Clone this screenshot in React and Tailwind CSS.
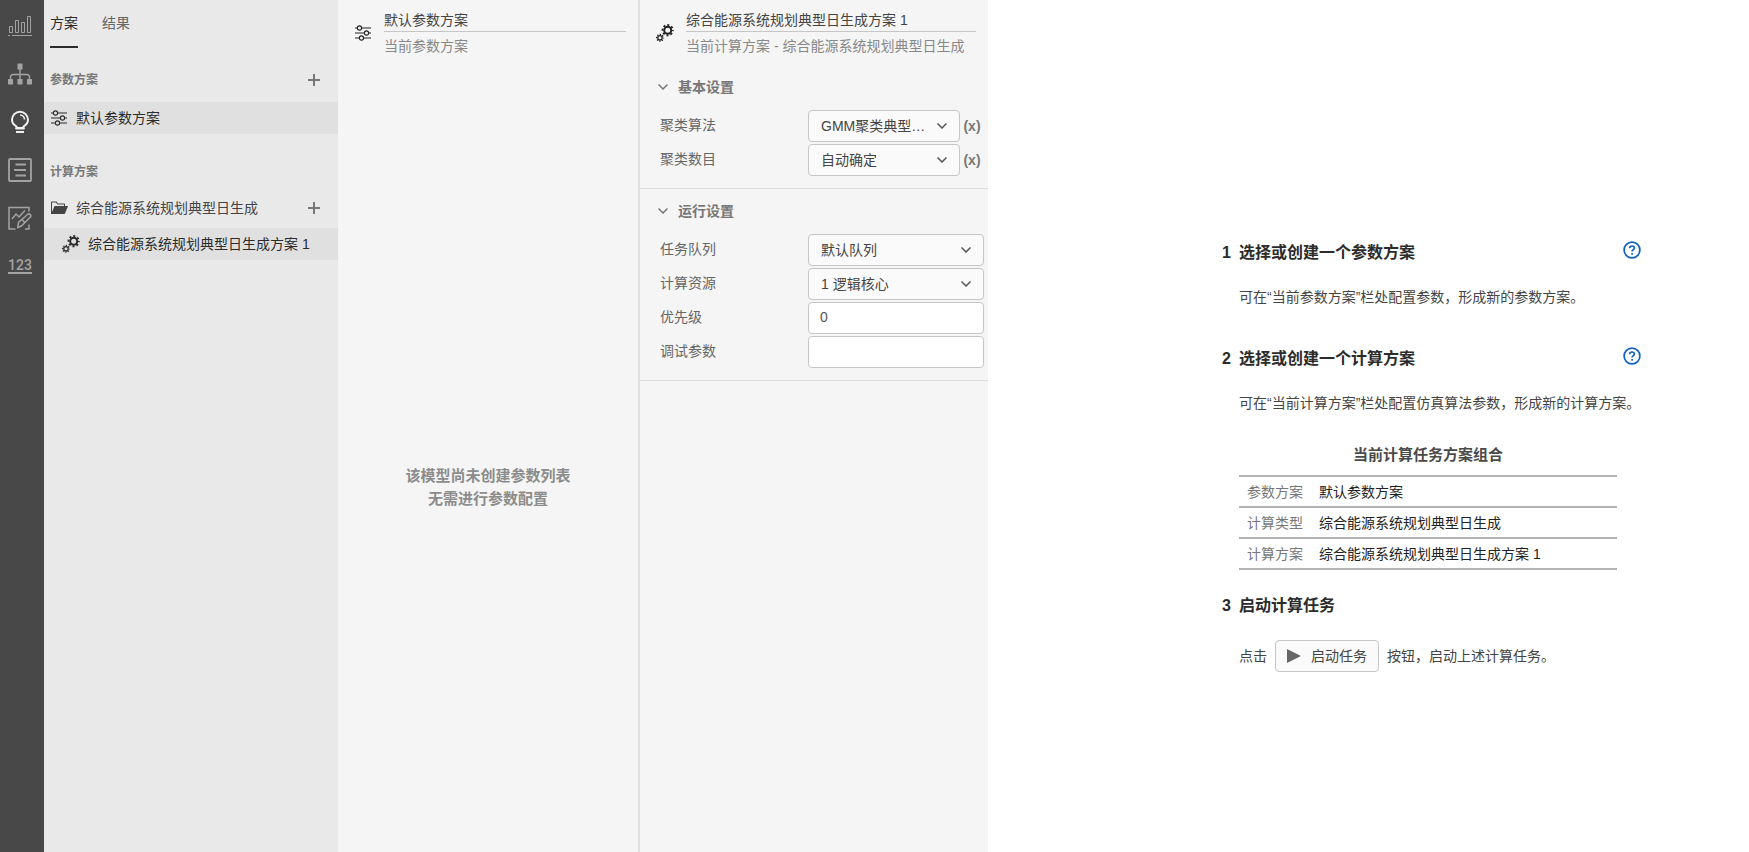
import React, { useState } from 'react';

const BarsIcon = () => (
  <svg width="24" height="24" viewBox="0 0 24 24" fill="none" stroke="currentColor">
    <path d="M1.5 12.5h3v6h-3zM7.5 6.5h3v12h-3zM13.5 8.5h3v10h-3zM19.5 2.5h3v16h-3z" />
    <path d="M0 21.500h2M4 21.500h20" />
  </svg>
);

const TreeIcon = () => (
  <svg width="24" height="24" viewBox="0 0 24 24" fill="currentColor">
    <rect x="9.500" y="1.500" width="5" height="6" rx=".5" />
    <rect x="0" y="17" width="5" height="5.500" rx=".5" />
    <rect x="9.500" y="17" width="5" height="5.500" rx=".5" />
    <rect x="19" y="17" width="5" height="5.500" rx=".5" />
    <path d="M12 6v11M2.500 17v-2a2.500 2.500 0 0 1 2.500-2.500h14a2.500 2.500 0 0 1 2.500 2.500v2" fill="none" stroke="currentColor" strokeWidth="1.400" />
  </svg>
);

const BulbIcon = () => (
  <svg width="24" height="24" viewBox="0 0 24 24" fill="none" stroke="currentColor" strokeWidth="2">
    <path d="M8.500 18v-1.500C5.500 14.800 4 12.800 4 9.800a8 8 0 0 1 16 0c0 3-1.500 5-4.500 6.700V18z" />
    <path d="M12 5a4.500 4.500 0 0 1 4.500 4.500" strokeWidth="1.600" />
    <path d="M7.500 18.500h9M8 22h8" />
  </svg>
);

const ListIcon = () => (
  <svg width="24" height="24" viewBox="0 0 24 24" fill="none" stroke="currentColor" strokeWidth="1.800">
    <rect x="1" y="1" width="22" height="22" rx="1" />
    <path d="M7.500 6.500H18M6 12h12M7.500 17.500H18" />
  </svg>
);

const ChartEditIcon = () => (
  <svg width="24" height="24" viewBox="0 0 24 24" fill="none" stroke="currentColor" strokeWidth="1.500">
    <path d="M21 5.500V1.500H1V23h6.500M17 23h4v-4.500" />
    <path d="M4 13l4-5 3 3 6-6.500" />
    <path d="M9.800 21.500l.7-5 9-8c1-.8 2.200-.6 2.900.2s.5 2-.4 2.800l-8.700 8.500z" />
    <path d="M14 13.500l3 3.200" />
  </svg>
);

const SlidersIcon = () => (
  <svg width="16" height="16" viewBox="0 0 16 16" fill="none" stroke="currentColor" strokeWidth="1.100" className="shrink-0">
    <path d="M0 3h2.300M6.700 3H16M0 8h9.300M13.700 8H16M0 13h4.300M8.700 13H16" />
    <circle cx="4.500" cy="3" r="2.100" />
    <circle cx="11.500" cy="8" r="2.100" />
    <circle cx="6.500" cy="13" r="2.100" />
  </svg>
);

const GearsIcon = () => (
  <svg width="18" height="18" viewBox="0 0 18 18" fill="none" stroke="currentColor" className="shrink-0">
    <circle cx="11.700" cy="6.200" r="3.500" strokeWidth="2" />
    <circle cx="11.700" cy="6.200" r="5.200" strokeWidth="1.800" strokeDasharray="2.040 2.044" strokeDashoffset="1.020" />
    <circle cx="4" cy="13.800" r="2.200" strokeWidth="1.300" />
    <circle cx="4" cy="13.800" r="3.400" strokeWidth="1.200" strokeDasharray="1.300 1.370" strokeDashoffset=".65" />
  </svg>
);

const FolderIcon = () => (
  <svg width="17" height="14" viewBox="0 0 17 14" fill="currentColor" className="shrink-0">
    <path d="M0 13V1.500C0 .9.400.5 1 .5h4.500L7 2.500h6c.6 0 1 .4 1 1V5h-1V3.500H6.500L5 1.500H1V11l2.500-6H17l-3 7.500c-.2.300-.4.500-.8.500z" />
  </svg>
);

const PlusIcon = () => (
  <svg width="12" height="12" viewBox="0 0 12 12" stroke="currentColor" strokeWidth="2">
    <path d="M6 0v12M0 6h12" />
  </svg>
);

const ChevronIcon = ({ className }) => (
  <svg width="10" height="6" viewBox="0 0 10 6" fill="none" stroke="currentColor" strokeWidth="1.500" className={className}>
    <path d="M.5.5L5 5 9.500.5" />
  </svg>
);

const HelpIcon = () => (
  <svg width="18" height="18" viewBox="0 0 18 18" fill="none" stroke="currentColor" strokeWidth="1.700">
    <circle cx="9" cy="9" r="7.900" />
    <path d="M6.700 7.200c0-1.300 1-2.200 2.300-2.200s2.300.8 2.300 2c0 1.600-2.200 1.700-2.200 3.500" />
    <path d="M9.100 12v1.800" />
  </svg>
);

const navItems = [
  { label: '图表', icon: <BarsIcon /> },
  { label: '拓扑', icon: <TreeIcon /> },
  { label: '运行', icon: <BulbIcon />, active: true },
  { label: '列表', icon: <ListIcon /> },
  { label: '编辑', icon: <ChartEditIcon /> },
  {
    label: '数据',
    icon: <span className="border-b-2 border-current text-sm leading-[14px] font-medium font-[Roboto,sans-serif]">123</span>,
  },
];

const tabs = ['方案', '结果'];

const basicFields = [
  { id: 'algorithm', label: '聚类算法', options: ['GMM聚类典型日选取'], variable: true },
  { id: 'clusters', label: '聚类数目', options: ['自动确定'], variable: true },
];

const runFields = [
  { id: 'queue', label: '任务队列', options: ['默认队列'] },
  { id: 'resource', label: '计算资源', options: ['1 逻辑核心'] },
  { id: 'priority', label: '优先级', value: '0' },
  { id: 'debug', label: '调试参数', value: '' },
];

const summary = [
  ['参数方案', '默认参数方案'],
  ['计算类型', '综合能源系统规划典型日生成'],
  ['计算方案', '综合能源系统规划典型日生成方案 1'],
];

const Field = ({ field }) => (
  <div className="flex items-center h-8">
    <label htmlFor={field.id} className="w-[148px] shrink-0 pb-0.5 text-[#666]">{field.label}</label>
    {field.options ? (
      <div className="relative flex-1 min-w-0">
        <select
          id={field.id}
          className="block w-full h-8 pl-3 pr-8 appearance-none truncate rounded border border-[#c6c6c6] bg-[#fafafa] text-[#444]"
        >
          {field.options.map(o => <option key={o}>{o}</option>)}
        </select>
        <ChevronIcon className="absolute right-[13px] top-[13px] text-[#555] pointer-events-none" />
      </div>
    ) : (
      <input
        id={field.id}
        type="text"
        defaultValue={field.value}
        className="flex-1 min-w-0 h-8 px-[11px] pb-0.5 rounded border border-[#c6c6c6] bg-white text-[#555]"
      />
    )}
    {field.variable && (
      <button type="button" className="w-6 text-center font-bold text-[#777]">(x)</button>
    )}
  </div>
);

const Section = ({ title, fields }) => {
  const [open, setOpen] = useState(true);

  return (
    <section className="pl-5 pr-1 pb-3 border-b border-[#dcdcdc]">
      <button type="button" onClick={() => setOpen(!open)} className="flex items-center gap-2.5 h-[45px] -ml-0.5 pb-0.5 font-bold text-[#777]">
        <ChevronIcon className="text-[#777]" />
        {title}
      </button>
      {open && (
        <div className="flex flex-col gap-0.5">
          {fields.map(f => <Field key={f.id} field={f} />)}
        </div>
      )}
    </section>
  );
};

const PanelHeader = ({ icon, title, subtitle }) => (
  <header className="flex items-start gap-3 h-[65px] pt-[7px] pl-4 pr-3 text-[#222]">
    <div className="flex items-center justify-center w-[18px] h-[52px]">{icon}</div>
    <div className="flex-1 min-w-0">
      <input
        type="text"
        aria-label={subtitle}
        defaultValue={title}
        className="block w-full h-[25px] border-b border-[#c6c6c6] text-[#444]"
      />
      <p className="pt-1 leading-5 truncate text-[#888]">{subtitle}</p>
    </div>
  </header>
);

const Step = ({ number, title, help, children }) => (
  <li>
    <div className="flex items-start">
      <h3 className="flex flex-1 text-base leading-6 font-bold text-[#2b2b2b]">
        <span className="w-[17px]">{number}</span>
        {title}
      </h3>
      {help && (
        <button type="button" aria-label="帮助" className="text-[#0f62c0]"><HelpIcon /></button>
      )}
    </div>
    <div className="pl-[17px] pt-[22px]">{children}</div>
  </li>
);

const App = () => {
  const [tab, setTab] = useState('方案');

  return (
    <div className="flex min-h-screen bg-white text-sm leading-5 font-['Liberation_Sans','Noto_Sans_CJK_SC',sans-serif]">
      <nav className="flex flex-col w-11 shrink-0 pt-0.5 bg-[#484848]">
        {navItems.map(item => (
          <button
            key={item.label}
            type="button"
            aria-label={item.label}
            className={`flex items-center justify-center w-10 h-12 ${item.active ? 'text-[#f0f0f0]' : 'text-[#a3a3a3]'}`}
          >
            {item.icon}
          </button>
        ))}
      </nav>

      {/* Scheme list */}
      <aside className="w-[294px] shrink-0 bg-[#e9e9e9] text-[#444]">
        <div className="flex gap-6 px-1.5">
          {tabs.map(t => (
            <button
              key={t}
              type="button"
              onClick={() => setTab(t)}
              className={`h-12 border-b-2 ${tab === t ? 'border-[#2b2b2b] text-[#2b2b2b]' : 'border-transparent text-[#666]'}`}
            >
              {t}
            </button>
          ))}
        </div>

        <div className="flex items-center justify-between h-[54px] pl-1.5 pr-[18px] pt-2.5 text-[#777]">
          <h2 className="text-xs font-bold">参数方案</h2>
          <button type="button" aria-label="新建参数方案"><PlusIcon /></button>
        </div>
        <a href="#param" className="flex items-center gap-[9px] h-8 pl-[7px] bg-[#e0e0e0] text-[#2b2b2b]">
          <SlidersIcon />
          默认参数方案
        </a>

        <h2 className="pt-7 pl-1.5 text-xs leading-5 font-bold text-[#777]">计算方案</h2>
        <div className="flex items-center h-10 mt-1.5 pl-[7px] pr-[18px]">
          <a href="#type" className="flex flex-1 items-center gap-2">
            <FolderIcon />
            综合能源系统规划典型日生成
          </a>
          <button type="button" aria-label="新建计算方案" className="text-[#777]"><PlusIcon /></button>
        </div>
        <a href="#job" className="flex items-center gap-2 h-8 pl-[18px] bg-[#e0e0e0] text-[#2b2b2b]">
          <GearsIcon />
          综合能源系统规划典型日生成方案 1
        </a>
      </aside>

      {/* Current parameter scheme */}
      <section className="flex flex-col w-[302px] shrink-0 bg-[#f5f5f5] border-r-2 border-[#e0e0e0]">
        <PanelHeader icon={<SlidersIcon />} title="默认参数方案" subtitle="当前参数方案" />
        <div className="flex flex-1 flex-col justify-center pt-[57px] text-center text-[15px] leading-[23px] font-bold text-[#8c8c8c]">
          <p>该模型尚未创建参数列表</p>
          <p>无需进行参数配置</p>
        </div>
      </section>

      {/* Current job scheme */}
      <section className="w-[348px] shrink-0 bg-[#f5f5f5]">
        <PanelHeader icon={<GearsIcon />} title="综合能源系统规划典型日生成方案 1" subtitle="当前计算方案 - 综合能源系统规划典型日生成" />
        <Section title="基本设置" fields={basicFields} />
        <Section title="运行设置" fields={runFields} />
      </section>

      <main className="flex flex-1 justify-end pt-[241px] pr-[108px] text-[#444]">
        <ol className="w-[419px]">
          <Step number="1" title="选择或创建一个参数方案" help>
            <p className="pb-10">可在“当前参数方案”栏处配置参数，形成新的参数方案。</p>
          </Step>
          <Step number="2" title="选择或创建一个计算方案" help>
            <p>可在“当前计算方案”栏处配置仿真算法参数，形成新的计算方案。</p>
            <table className="w-[378px] mt-8 mb-6 border-collapse">
              <caption className="pb-2.5 text-[15px] font-bold text-[#4a4a4a]">当前计算任务方案组合</caption>
              <tbody>
                {summary.map(([name, value]) => (
                  <tr key={name} className="h-[31px] border-y-2 border-[#b3b3b3]">
                    <th scope="row" className="w-20 pl-2 text-left font-normal text-[#777]">{name}</th>
                    <td className="text-[#222]">{value}</td>
                  </tr>
                ))}
              </tbody>
            </table>
          </Step>
          <Step number="3" title="启动计算任务">
            <div className="flex items-center gap-2">
              点击
              <button type="button" className="flex items-center gap-2.5 h-8 px-[11px] rounded border border-[#c6c6c6] bg-[#fafafa] text-[#444]">
                <svg width="14" height="14" viewBox="0 0 14 14" fill="#666">
                  <path d="M0 0l14 7-14 7z" />
                </svg>
                启动任务
              </button>
              按钮，启动上述计算任务。
            </div>
          </Step>
        </ol>
      </main>
    </div>
  );
};

export default App;
